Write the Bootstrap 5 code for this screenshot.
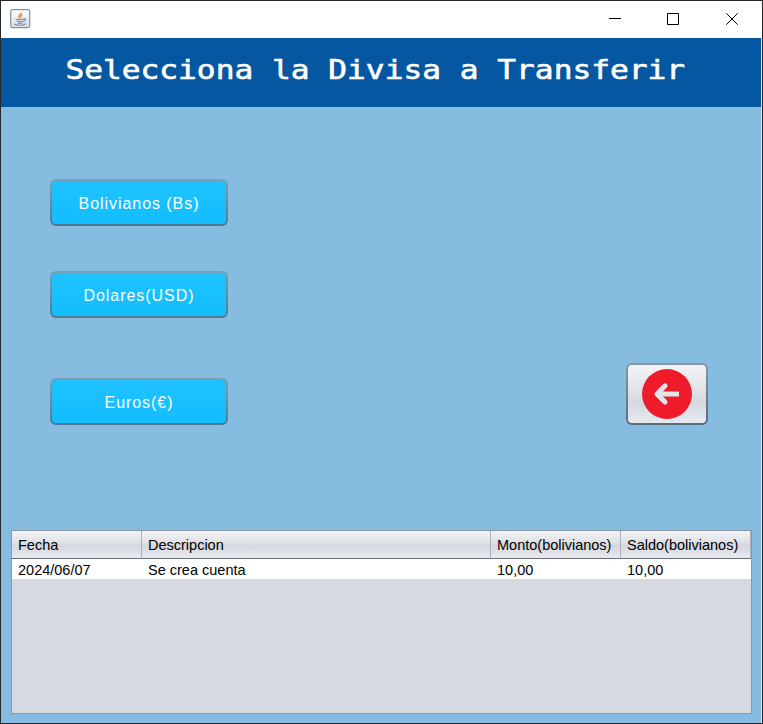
<!DOCTYPE html>
<html lang="es">
<head>
<meta charset="utf-8">
<meta name="viewport" content="width=device-width, initial-scale=1">
<title>Selecciona la Divisa a Transferir</title>
<link href="https://cdn.jsdelivr.net/npm/bootstrap@5.3.0/dist/css/bootstrap.min.css" rel="stylesheet">
<style>
body{font-family:"Liberation Sans",Arial,sans-serif;color:#000;background:#86bce0}
.app-window{width:763px;height:724px;border:1px solid #26282c;background:#86bce0;box-shadow:inset -1px 0 0 #dfe3e6}
.title-bar{height:37px;background:#fff;padding-left:9px}
.title-bar .app-icon{margin-bottom:2px}
.caption-icons{width:150px;height:37px;overflow:visible}
.banner{height:69px;background:#0457a0;margin-right:1px;padding:0 11px 5px 0}
.banner h1{font:400 26.5px/1 "DejaVu Sans Mono",monospace;transform:scaleX(1.177);white-space:nowrap;-webkit-text-stroke:.6px #fff}
.workspace{height:423px;padding:72px 54px 0 49px}
.coin-btn,.back-btn{border:2px solid transparent;border-radius:6px;background-clip:padding-box,border-box;background-origin:border-box}
.coin-btn{width:178px;height:47px;font-size:16px;letter-spacing:.95px;line-height:1;color:#fff;padding:2px 0 0;background-image:linear-gradient(#20c2ff,#12bdff),linear-gradient(#7ca0b5,#50798f)}
.coin-btn:hover{color:#fff}
.second{margin-top:45px}
.third{margin-top:60px}
.back-btn{width:82px;height:62px;padding:0;margin-top:184px;background-image:linear-gradient(#f3f4f6,#e1e3e8 45%,#d5d8df 62%,#e9ebf2),linear-gradient(#8b98a3,#586b79)}
.grid-pane{width:741px;height:184px;margin-left:10px;border:1px solid #8a98a8;background:#d6d9e0;font-size:14.5px}
.grid-pane table{table-layout:fixed;width:739px;border-collapse:separate;border-spacing:0}
.grid-pane th{height:28px;font-weight:400;padding:1px 0 0 6px;line-height:16px;white-space:nowrap;background:linear-gradient(#f3f4f7,#dfe1e6 42%,#d4d7dd 55%,#e8eaf0);border-right:1px solid #abb0b9;border-bottom:1px solid #686c73}
.grid-pane td{height:20px;padding:2px 0 0 6px;line-height:16px;background:#fff;white-space:nowrap}
</style>
</head>
<body>
<div class="app-window overflow-hidden d-flex flex-column">
  <header class="title-bar d-flex align-items-center justify-content-between flex-shrink-0">
    <svg class="app-icon" width="21" height="20" viewBox="0 0 21 20" aria-label="Java">
      <defs><linearGradient id="tile" x2="0" y2="1"><stop stop-color="#fff"/><stop offset="1" stop-color="#d9dde2"/></linearGradient></defs>
      <rect x=".7" y=".7" width="19" height="18" rx="1.8" fill="url(#tile)" stroke="#7e95a8" stroke-width="1.2"/>
      <path d="M11 3.500c.8 1.800-3 2.800-2.200 4.500l1 1.200M12.300 5.600c-2 1-2.200 1.800-1.300 3.300" fill="none" stroke="#ee9344" stroke-width="1.600"/>
      <path d="M5.500 10c2 .9 6.500.9 8 0M6.500 12c2 .8 4.500.8 6.500 0M7.500 14c2 .6 3.500.6 5 0M13.500 9.800c3-.8 2.500 2.200-.5 2.800M4 15c2.500 1.700 9 1.700 12-.3" fill="none" stroke="#7791aa" stroke-width="1.200"/>
    </svg>
    <svg class="caption-icons" viewBox="612 1 150 37" fill="none" stroke="#000" stroke-width="1">
      <path d="M609 18.500h12M667.500 13.500h11v11h-11zM726.300 13.300l11.400 11.400M737.700 13.300l-11.400 11.400"/>
    </svg>
  </header>
  <div class="banner d-flex align-items-center justify-content-center text-white flex-shrink-0">
    <h1 class="m-0">Selecciona la Divisa a Transferir</h1>
  </div>
  <main class="workspace d-flex justify-content-between align-items-start flex-shrink-0">
    <div class="d-flex flex-column">
      <button class="btn coin-btn" type="button">Bolivianos (Bs)</button>
      <button class="btn coin-btn second" type="button">Dolares(USD)</button>
      <button class="btn coin-btn third" type="button">Euros(€)</button>
    </div>
    <button class="btn back-btn d-flex align-items-center justify-content-center" type="button" aria-label="Volver">
      <svg width="52" height="52" viewBox="0 0 52 52"><circle cx="26" cy="26" r="25" fill="#ee1c2b"/><path d="M24 17.800L16 26l8 8" fill="none" stroke="#e3e4e9" stroke-width="5" stroke-linejoin="round" stroke-linecap="round"/><path d="M17 26h21" stroke="#e3e4e9" stroke-width="5"/></svg>
    </button>
  </main>
  <section class="grid-pane flex-shrink-0">
    <table>
      <colgroup><col style="width:130px"><col style="width:349px"><col style="width:130px"><col style="width:130px"></colgroup>
      <thead><tr><th>Fecha</th><th>Descripcion</th><th>Monto(bolivianos)</th><th>Saldo(bolivianos)</th></tr></thead>
      <tbody><tr><td>2024/06/07</td><td>Se crea cuenta</td><td>10,00</td><td>10,00</td></tr></tbody>
    </table>
  </section>
</div>
<script src="https://cdn.jsdelivr.net/npm/bootstrap@5.3.0/dist/js/bootstrap.bundle.min.js"></script>
</body>
</html>
